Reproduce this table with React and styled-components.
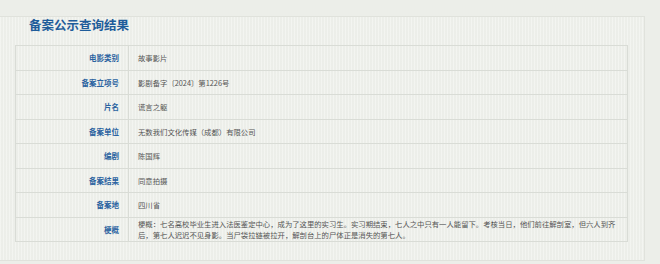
import styled, { createGlobalStyle } from "styled-components";

const GlobalStyle = createGlobalStyle`
  html, body {
    margin: 0;
    padding: 0;
    background: #eceee9;
    font-family: "Noto Sans CJK SC", "Liberation Sans", sans-serif;
  }
`;

const Panel = styled.div`
  margin: 16px 15px 0 0;
  padding: 0 16px 18px 15px;
  border: 1px solid #e0e2dc;
  border-left: none;
  background: #eff1ec;
  background-image: repeating-linear-gradient(
    90deg,
    rgba(255, 255, 255, 0.25) 0px,
    rgba(255, 255, 255, 0.25) 1px,
    rgba(0, 0, 0, 0.01) 1px,
    rgba(0, 0, 0, 0.01) 3px
  );
`;

const Title = styled.h2`
  margin: 0;
  padding: 0 0 0 14px;
  height: 28px;
  font-size: 12.5px;
  line-height: 15px;
  font-weight: bold;
  color: #1e5c9a;
`;

const Table = styled.div`
  display: grid;
  grid-template-columns: 113px 1fr;
  border: 1px solid #d9dcd6;
  border-bottom: none;
`;

const Label = styled.div`
  display: flex;
  align-items: center;
  justify-content: flex-end;
  min-height: 23.5px;
  padding: 0 9px 0 0;
  border-right: 1px solid #d9dcd6;
  border-bottom: 1px solid #d9dcd6;
  font-size: 7.5px;
  font-weight: bold;
  color: #2b63a0;
`;

const Value = styled.div`
  display: flex;
  align-items: center;
  min-height: 23.5px;
  padding: 0 2px 0 9px;
  border-bottom: 1px solid #d9dcd6;
  font-size: 7.35px;
  line-height: 11px;
  color: #555;
`;

const rows = [
  ["电影类别", "故事影片"],
  ["备案立项号", "影剧备字〔2024〕第1226号"],
  ["片名", "谎言之躯"],
  ["备案单位", "无数我们文化传媒（成都）有限公司"],
  ["编剧", "陈国辉"],
  ["备案结果", "同意拍摄"],
  ["备案地", "四川省"],
  [
    "梗概",
    "梗概：七名高校毕业生进入法医鉴定中心，成为了这里的实习生。实习期结束，七人之中只有一人能留下。考核当日，他们前往解剖室，但六人到齐后，第七人迟迟不见身影。当尸袋拉链被拉开，解剖台上的尸体正是消失的第七人。",
  ],
];

export default function App() {
  return (
    <>
      <GlobalStyle />
      <Panel>
        <Title>备案公示查询结果</Title>
        <Table>
          {rows.map(([label, value]) => (
            <>
              <Label key={label + "l"}>{label}</Label>
              <Value key={label + "v"}>{value}</Value>
            </>
          ))}
        </Table>
      </Panel>
    </>
  );
}
